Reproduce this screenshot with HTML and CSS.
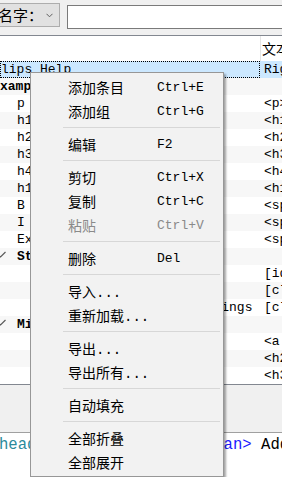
FILE: index.html
```html
<!DOCTYPE html>
<html>
<head>
<meta charset="utf-8">
<link rel="stylesheet" href="styles.css">
</head>
<body>
<div class="toolbar">
  <div class="combo"><span class="combo-label">名字：</span><svg class="chev" width="7" height="5" viewBox="0 0 7 5"><path d="M0.5 0.8 L3.5 3.8 L6.5 0.8" fill="none" stroke="#606060" stroke-width="1"/></svg></div>
  <div class="search"></div>
</div>
<div class="list">
  <div class="list-head">
    <div class="hcol1"></div>
    <div class="hcol2">文本</div>
  </div>
  <div class="rows">
    <div class="row selected"><div class="c1 focus">lips Help</div><div class="c2">Right</div></div>
    <div class="row"><div class="c1 bold">xamples</div><div class="c2"></div></div>
    <div class="row"><div class="c1 l1">p</div><div class="c2">&lt;p&gt;</div></div>
    <div class="row"><div class="c1 l1">h1</div><div class="c2">&lt;h1&gt;</div></div>
    <div class="row"><div class="c1 l1">h2</div><div class="c2">&lt;h2&gt;</div></div>
    <div class="row"><div class="c1 l1">h3</div><div class="c2">&lt;h3&gt;</div></div>
    <div class="row"><div class="c1 l1">h4</div><div class="c2">&lt;h4&gt;</div></div>
    <div class="row"><div class="c1 l1">h1</div><div class="c2">&lt;h1&gt;</div></div>
    <div class="row"><div class="c1 l1">B</div><div class="c2">&lt;span</div></div>
    <div class="row"><div class="c1 l1">I</div><div class="c2">&lt;span</div></div>
    <div class="row"><div class="c1 l1">Ex</div><div class="c2">&lt;span</div></div>
    <div class="row"><div class="c1 bold"><svg class="exp" width="17" height="17" viewBox="0 0 17 17"><path d="M-3 5.5 L0.5 9 L5.5 4" fill="none" stroke="#5a5a5a" stroke-width="1.2"/></svg>St</div><div class="c2"></div></div>
    <div class="row"><div class="c1 l2">Id selector</div><div class="c2">[id]</div></div>
    <div class="row"><div class="c1 l2">Class selector</div><div class="c2">[class]</div></div>
    <div class="row"><div class="c1 l2">Adjacent or general siblings</div><div class="c2">[class]</div></div>
    <div class="row"><div class="c1 bold"><svg class="exp" width="17" height="17" viewBox="0 0 17 17"><path d="M-3 5.5 L0.5 9 L5.5 4" fill="none" stroke="#5a5a5a" stroke-width="1.2"/></svg>Mi</div><div class="c2"></div></div>
    <div class="row"><div class="c1 l2">Link</div><div class="c2">&lt;a href</div></div>
    <div class="row"><div class="c1 l2">Header</div><div class="c2">&lt;h2&gt;</div></div>
    <div class="row"><div class="c1 l2">Header</div><div class="c2">&lt;h3&gt;</div></div>
  </div>
</div>
<div class="panel"></div>
<div class="editor"><div class="code-line"><span class="tk-tag">head</span>&gt;&lt;/head&gt;&lt;body&gt;&lt;p&gt;&lt;sp<span class="tk-kw">an&gt;</span> Add</div></div>

<div class="menu">
  <div class="mi"><span class="ml">添加条目</span><span class="ms">Ctrl+E</span></div>
  <div class="mi"><span class="ml">添加组</span><span class="ms">Ctrl+G</span></div>
  <div class="sep"></div>
  <div class="mi"><span class="ml">编辑</span><span class="ms">F2</span></div>
  <div class="sep"></div>
  <div class="mi"><span class="ml">剪切</span><span class="ms">Ctrl+X</span></div>
  <div class="mi"><span class="ml">复制</span><span class="ms">Ctrl+C</span></div>
  <div class="mi disabled"><span class="ml">粘贴</span><span class="ms">Ctrl+V</span></div>
  <div class="sep"></div>
  <div class="mi"><span class="ml">删除</span><span class="ms">Del</span></div>
  <div class="sep"></div>
  <div class="mi"><span class="ml">导入...</span></div>
  <div class="mi"><span class="ml">重新加载...</span></div>
  <div class="sep"></div>
  <div class="mi"><span class="ml">导出...</span></div>
  <div class="mi"><span class="ml">导出所有...</span></div>
  <div class="sep"></div>
  <div class="mi"><span class="ml">自动填充</span></div>
  <div class="sep"></div>
  <div class="mi"><span class="ml">全部折叠</span></div>
  <div class="mi"><span class="ml">全部展开</span></div>
</div>
</body>
</html>
```
FILE: styles.css
```css
* { box-sizing: border-box; }
html, body { margin: 0; padding: 0; }
body {
  width: 282px;
  height: 477px;
  overflow: hidden;
  position: relative;
  background: #f0f0f0;
  font-family: "Liberation Mono", "Noto Sans CJK SC", monospace;
  color: #000;
}

/* top bar */
.toolbar { display: flex; align-items: flex-start; height: 35px; }
.combo {
  flex: none;
  margin-top: 3px;
  margin-left: -4px;
  width: 64px;
  height: 24px;
  border: 1px solid #adadad;
  background: #e1e1e1;
  display: flex;
  align-items: center;
  padding-left: 1px;
}
.combo-label { font-family: "Noto Sans CJK SC", sans-serif; font-size: 15px; line-height: 22px; }
.chev { margin-left: 3px; }
.search {
  flex: none;
  margin-top: 5px;
  margin-left: 7px;
  width: 240px;
  height: 24px;
  background: #fff;
  border: 1px solid #7a7a7a;
}

/* list */
.list {
  background: #fff;
  border-top: 1px solid #828790;
  border-bottom: 1px solid #828790;
  height: 350px;
  overflow: hidden;
}
.list-head { display: flex; height: 25px; }
.hcol1 { flex: none; width: 261px; border-right: 1px solid #e5e5e5; }
.hcol2 { padding-left: 1px; font-family: "Noto Sans CJK SC", sans-serif; font-size: 14px; line-height: 24px; white-space: nowrap; }
.row { display: flex; height: 17px; line-height: 17px; font-size: 13px; white-space: nowrap; }
.row:nth-child(even) { background: #f7f7f7; }
.row.selected { background: #cce8ff; }
.c1 { flex: none; width: 260px; overflow: hidden; display: flex; align-items: center; }
.c1.focus { border: 1px dotted #000; line-height: 15px; }
.c1.bold { font-weight: bold; }
.c1.l1 { padding-left: 17px; }
.c1.l2 { padding-left: 34px; }
.c2 { padding-left: 4px; }
.exp { flex: none; }

/* lower panels */
.panel { height: 47px; background: #f0f0f0; }
.editor {
  height: 45px;
  background: #fff;
  border-top: 1px solid #a0a0a0;
  padding-top: 3px;
}
.code-line {
  margin-left: -1px;
  font-family: "Liberation Mono", monospace;
  font-size: 15.6px;
  line-height: 18px;
  white-space: nowrap;
  color: #000;
}
.tk-tag { color: #2b8a9b; }
.tk-kw { color: #1a1aff; }

/* context menu */
.menu {
  position: absolute;
  left: 30px;
  top: 72px;
  width: 194px;
  padding: 2px 0;
  background: #f2f2f2;
  border: 1px solid #979797;
  box-shadow: 2px 2px 2px rgba(0, 0, 0, 0.35);
}
.mi {
  display: flex;
  align-items: center;
  height: 24px;
  padding-left: 37px;
  white-space: nowrap;
}
.ml {
  width: 89px;
  flex: none;
  font-family: "Liberation Mono", "Noto Sans CJK SC", monospace;
  font-size: 14px;
}
.ms { font-family: "Liberation Mono", monospace; font-size: 13px; }
.mi.disabled { color: #8a8a8a; }
.sep {
  height: 9px;
  margin: 0 3px 0 32px;
  background: linear-gradient(#d7d7d7, #d7d7d7) 0 4px / 100% 1px no-repeat;
}
```
